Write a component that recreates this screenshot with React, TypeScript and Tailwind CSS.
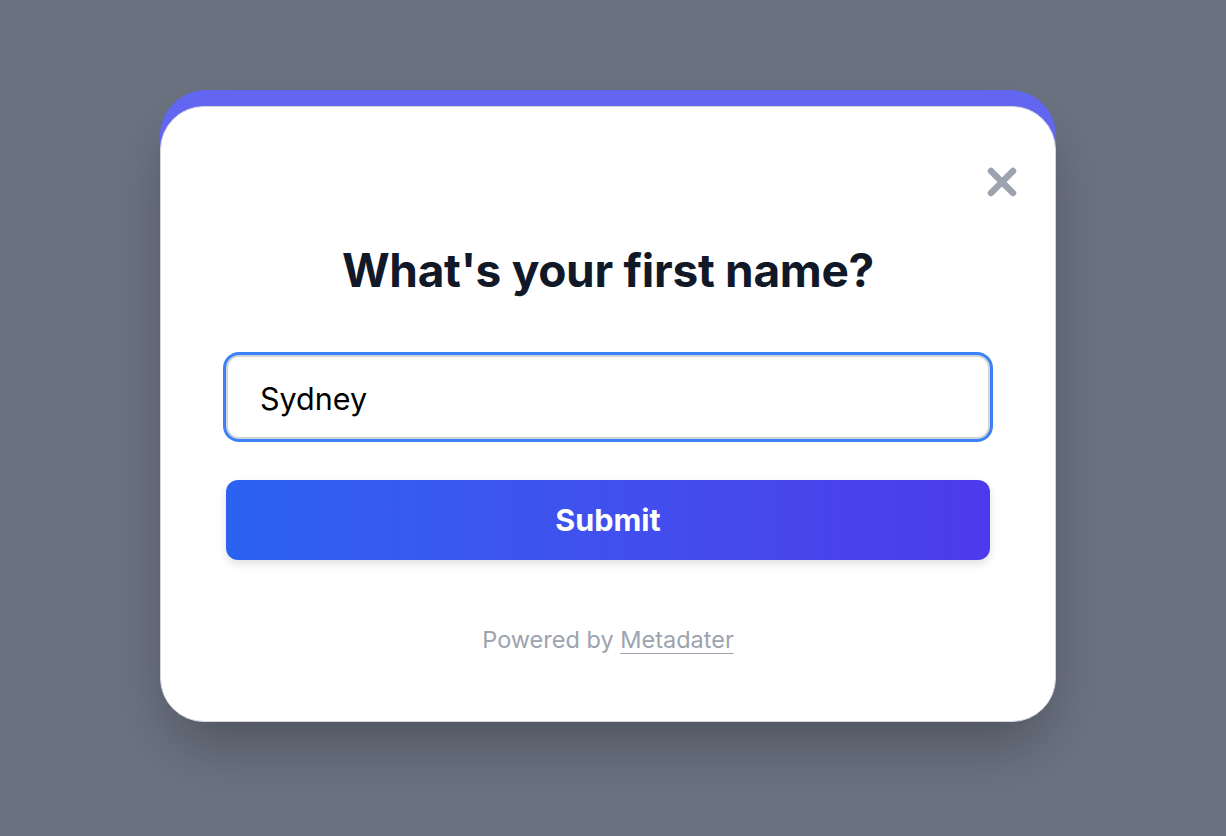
import { useState } from 'react'

export default function App() {
  const [name, setName] = useState('Sydney')

  return (
    <div className="min-h-[836px] w-full bg-[#6b7280] pl-[160px] pt-[90px]" style={{ fontFamily: 'Inter, "Noto Sans", sans-serif' }}>
      {/* Card */}
      <div className="relative w-[896px] rounded-[46px] bg-[#6366f1] pt-4 shadow-[0_30px_60px_-12px_rgba(0,0,0,0.3)]">
        <div className="relative flex flex-col rounded-[44px] border border-[#d4d6db] bg-white px-[65px] pb-[65px] pt-[136px]">
          {/* Close */}
          <button className="absolute right-[36px] top-[58px] text-[#9ca3af]" aria-label="Close">
            <svg width="34" height="34" viewBox="0 0 34 34" fill="none">
              <path d="M6 6L28 28M28 6L6 28" stroke="currentColor" strokeWidth="6.5" strokeLinecap="round" />
            </svg>
          </button>

          <h1 className="text-center text-[46px] font-bold leading-[54px] tracking-[-0.3px] text-[#111827]">
            What's your first name?
          </h1>

          <input
            value={name}
            onChange={(e) => setName(e.target.value)}
            className="mt-[58px] h-[84px] w-full rounded-[13px] border-2 border-[#d1d5db] bg-white px-[32px] pt-[3px] text-[30.5px] text-black outline-none ring-[3px] ring-[#3b82f6]"
          />

          <button className="mt-[41px] h-20 w-full rounded-[12px] bg-gradient-to-r from-[#2b62f0] to-[#4d3aeb] text-[30.5px] font-bold text-white shadow-[0_4px_8px_rgba(0,0,0,0.12)]">
            Submit
          </button>

          <p className="mt-[64px] text-center text-[23.5px] leading-[32px] text-[#9ca3af]">
            Powered by <a className="underline decoration-1 underline-offset-[5px]">Metadater</a>
          </p>
        </div>
      </div>
    </div>
  )
}
